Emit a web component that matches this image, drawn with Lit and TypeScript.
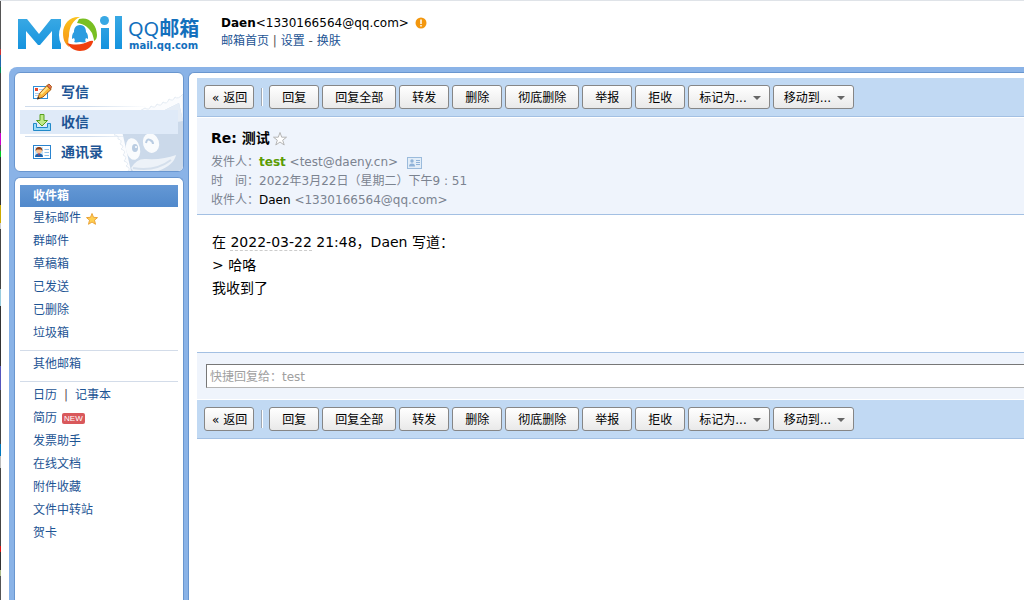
import { LitElement, html, css, svg } from "lit";
import { customElement } from "lit/decorators.js";

const uiFont = css`"DejaVu Sans", "Noto Sans CJK SC", sans-serif`;

@customElement("mail-logo")
class MailLogo extends LitElement {
  static styles = css`
    :host { display: flex; align-items: flex-start; gap: 5px; width: 184px; }
    svg { display: block; flex: none; }
    .words { display: flex; flex-direction: column; color: #1270bd; }
    .name { font: 20px/23px "Noto Sans", "Noto Sans CJK SC", sans-serif; white-space: nowrap; }
    .name b { font-family: "Noto Sans CJK SC", sans-serif; }
    .site { font: bold 10px/12px "DejaVu Sans", sans-serif; white-space: nowrap; padding-left: 1px; }
  `;
  render() {
    return html`
      <svg width="105" height="36" viewBox="0 0 105 36" role="img" aria-label="Mail">
        <defs>
          <linearGradient id="blue" x1="0" y1="0" x2="0" y2="1"><stop offset="0" stop-color="#38a8e4"/><stop offset="1" stop-color="#1593de"/></linearGradient>
          <linearGradient id="orange" x1="0" y1="0" x2="0" y2="1"><stop offset="0" stop-color="#fbc31d"/><stop offset="1" stop-color="#f79114"/></linearGradient>
        </defs>
        <path fill="url(#blue)" d="M0 3H9L21 18L33 3H43V10Q39 19 43 28V33H34V15L22 29H20L8 15V33H0Z"/>
        <circle cx="62" cy="18" r="20" fill="#fff"/>
        <path fill="url(#orange)" d="M62 1C52 0 45 8 45 17C45 24 47 28 51 31C50 27 50 24 51 20C51 11 55 4 62 1Z"/>
        <path fill="#79bf22" d="M61 3C71 0 79 9 79 19C79 22 78 24 76 25C76 23 75 20 74 17C71 12 67 8 59 7Q60 5 61 3Z"/>
        <path fill="#f0400f" d="M49 27C58 30 66 28 72 25Q76 24 75 26C73 32 68 35 62 35C56 35 51 31 49 27Z"/>
        <path fill="#2b9ce0" d="M62 9C57 9 56 13 56 16C54 18 54 20 54 23L56 22C57 24 57 25 56 26C58 27 60 26 62 26C64 26 66 27 68 26C67 25 67 24 68 22L70 23C70 20 70 18 68 16C68 13 67 9 62 9Z"/>
        <circle cx="86.500" cy="4.500" r="4.500" fill="#38a8e4"/>
        <path fill="url(#blue)" d="M83 12H91V33H83ZM97 0H104V33H97Z"/>
      </svg>
      <div class="words"><span class="name">QQ<b>邮箱</b></span><span class="site">mail.qq.com</span></div>
    `;
  }
}

@customElement("mail-toolbar")
class MailToolbar extends LitElement {
  static styles = css`
    :host { display: flex; align-items: center; gap: 3px; height: 38px; padding-left: 7px; background: #c1d9f3; border-bottom: 1px solid #a3c0e3; }
    button { box-sizing: border-box; flex: none; height: 24px; margin: 0; padding: 1px 12px 0; border: 1px solid #868686; border-radius: 3px; background: linear-gradient(#fff, #e9e9e9); color: #000; font: 12px/20px "DejaVu Sans", "Noto Sans CJK SC", sans-serif; white-space: nowrap; }
    .back { padding: 1px 6px 0 7px; }
    .menu { display: flex; align-items: center; gap: 6px; padding: 1px 8px 0 10px; }
    .menu::after { content: ""; border: 4px solid transparent; border-top-color: #666; border-bottom: 0; }
    .split { width: 1px; height: 18px; margin: 0 3px 0 4px; background: #a0a8b2; border-right: 1px solid #fff; }
  `;
  render() {
    return html`
      <button class="back">«&nbsp;返回</button>
      <span class="split"></span>
      ${["回复", "回复全部", "转发", "删除", "彻底删除", "举报", "拒收"].map((t) => html`<button>${t}</button>`)}
      ${["标记为...", "移动到..."].map((t) => html`<button class="menu">${t}</button>`)}
    `;
  }
}

const composeIcon = svg`
  <rect x="1.500" y="3.500" width="14" height="12" fill="#fff" stroke="#2f8fd8"/>
  <rect x="3" y="5" width="3" height="3" fill="#e8482c"/><path d="M7 6.500H12M3 10.500H8M3 12.500H6" stroke="#a9cdea"/>
  <path d="M5.500 16L7.500 10.500L15 2.500L19 6.500L11 14Z" fill="#fcb93a" stroke="#a85b12"/>
  <path d="M9 11L15.500 4.500" stroke="#ffe58c" stroke-width="2"/><path d="M15 2.500L17 1L19.500 3.500L18.500 6.500Z" fill="#e9725a" stroke="#a85b12"/><path d="M5 16.500L6 13.500L8 15.500Z" fill="#333"/>`;
const inboxIcon = svg`
  <path d="M1.500 10.500H4.500V14.500H15.500V10.500H18.500V17.500H1.500Z" fill="#9bdcf7" stroke="#2189c8"/>
  <path d="M8 1.500H12V7.500H15.500L10 13L4.500 7.500H8Z" fill="#bfe986" stroke="#58a020"/>`;
const contactIcon = svg`
  <rect x="1.500" y="2.500" width="17" height="13" fill="#fff" stroke="#2a84cf"/>
  <rect x="3" y="4" width="8" height="10" fill="#c5e4fa"/><circle cx="7" cy="7.500" r="3" fill="#f7c291"/><path d="M3.500 8Q3.500 4 7 4T10.500 8L9 6.500H5Z" fill="#8c3b12"/>
  <path d="M3 14Q3 10.500 7 10.500T11 14Z" fill="#1c62ac"/><path d="M6 10.500L7 13L8 10.500Z" fill="#e33"/><path d="M12.500 6.500H17M12.500 9.500H17M12.500 12.500H17" stroke="#8fc0e8"/>`;

@customElement("mail-sidebar")
class MailSidebar extends LitElement {
  static styles = css`
    :host { display: flex; flex-direction: column; gap: 5px; font: 12px/23px ${uiFont}; }
    a { color: #1d5494; text-decoration: none; }
    .panel { box-sizing: border-box; background: #fff; border: 1px solid #6996cf; border-radius: 6px; padding: 7px 5px; }
    .main { position: relative; height: 100px; overflow: hidden; }
    .art { position: absolute; right: 0; bottom: 0; }
    .main nav { position: relative; display: flex; flex-direction: column; }
    .main a { display: flex; align-items: center; gap: 9px; height: 24px; padding-left: 12px; font: bold 14px/24px ${uiFont}; }
    .main a.on { background: #dfeaf8; }
    .main a svg { width: 20px; height: 18px; }
    .rule { height: 1px; margin: 2px 0 3px 5px; background: linear-gradient(90deg, #cfdcec 40%, transparent 80%); }
    .folders { flex: 1; border-bottom: 0; border-radius: 6px 6px 0 0; }
    .row { display: flex; align-items: center; gap: 5px; height: 23px; padding-left: 13px; }
    .row.on { height: 22px; background: linear-gradient(#6498d5, #5189cb); }
    .row.on a { color: #fff; font-weight: bold; }
    .group { border-top: 1px solid #d3dce9; margin-top: 5px; padding-top: 2px; }
    .bar { color: #555; padding: 0 2px; }
    .new { padding: 0 2px; border-radius: 2px; background: #d9585b; color: #fff; font: 8px/11px "Liberation Sans", sans-serif; }
  `;
  render() {
    return html`
      <section class="panel main">
        <svg class="art" width="70" height="78" viewBox="0 0 70 78" aria-hidden="true">
          <path d="M1 42Q6 42 5 46Q10 47 7 51Q12 53 8 56Q14 58 10 62Q15 64 11 68Q17 70 13 73Q18 75 15 78H70V1Q65 7 62 4Q60 9 56 6Q54 12 50 9Q48 14 44 11Q42 16 38 13Q36 18 32 15Q22 19 1 42Z" fill="#fbfcfe" stroke="#e4ebf3"/>
          <path d="M9 38L66 10L70 28V78H18Z" fill="#cbd9ea"/><path d="M9 38L66 10L70 28Z" fill="#e6edf6"/>
          <ellipse cx="20" cy="56" rx="7" ry="11" fill="#f9fbfd" transform="rotate(-12 20 56)"/>
          <ellipse cx="38" cy="50" rx="8" ry="10" fill="#f9fbfd" transform="rotate(-16 38 50)"/>
          <ellipse cx="22" cy="55" rx="3" ry="4" fill="#b9cce2"/><circle cx="23" cy="54" r="1" fill="#fff"/>
          <path d="M33 50Q34 45 37 47Q40 48 40 51" fill="none" stroke="#b9cce2" stroke-width="2"/>
          <path d="M18 75Q24 65 33 66Q50 67 63 62Q61 72 45 78H20Z" fill="#edf2f8"/>
          <path d="M20 75Q42 79 58 67" fill="none" stroke="#d4dfec" stroke-width="2"/>
        </svg>
        <nav>
          <a href="#"><svg viewBox="0 0 20 18">${composeIcon}</svg>写信</a>
          <div class="rule"></div>
          <a href="#" class="on"><svg viewBox="0 0 20 18">${inboxIcon}</svg>收信</a>
          <div class="rule"></div>
          <a href="#"><svg viewBox="0 0 20 18">${contactIcon}</svg>通讯录</a>
        </nav>
      </section>
      <nav class="panel folders">
        <div class="row on"><a href="#">收件箱</a></div>
        <div class="row"><a href="#">星标邮件</a><svg width="12" height="12" viewBox="0 0 12 12"><path d="M6 .5L7.500 4.300L11.500 4.600L8.500 7.200L9.500 11.300L6 9L2.500 11.300L3.500 7.200L.5 4.600L4.500 4.300Z" fill="#ffcf50" stroke="#eba43a"/></svg></div>
        ${["群邮件", "草稿箱", "已发送", "已删除", "垃圾箱"].map((t) => html`<div class="row"><a href="#">${t}</a></div>`)}
        <div class="group"><div class="row"><a href="#">其他邮箱</a></div></div>
        <div class="group">
          <div class="row"><a href="#">日历</a><span class="bar">|</span><a href="#">记事本</a></div>
          <div class="row"><a href="#">简历</a><span class="new">NEW</span></div>
          ${["发票助手", "在线文档", "附件收藏", "文件中转站", "贺卡"].map((t) => html`<div class="row"><a href="#">${t}</a></div>`)}
        </div>
      </nav>
    `;
  }
}

@customElement("mail-reader")
class MailReader extends LitElement {
  static styles = css`
    :host { display: block; font: 12px/19px ${uiFont}; color: #000; }
    .head { margin-top: 1px; padding: 10px 14px 4px; background: #eff4fc; border-bottom: 1px solid #a3c0e3; color: #7b8390; }
    h1 { display: flex; align-items: center; gap: 2px; margin: 0 0 4px; font: bold 14px/21px ${uiFont}; color: #000; }
    .field { display: flex; align-items: center; height: 19px; white-space: pre; }
    .label { width: 48px; }
    .sender { color: #5b9c04; }
    .to { color: #000; }
    .card { margin-left: 9px; }
    .body { min-height: 121px; padding: 16px 15px 0; font-size: 14px; line-height: 23px; }
    .body p { margin: 0; }
    .date { border-bottom: 1px dashed #ccc; }
    .reply { display: flex; padding: 11px 0 11px 9px; background: #eff4fc; border-top: 1px solid #a3c0e3; border-bottom: 1px solid #fff; }
    input { box-sizing: border-box; flex: 1; min-width: 0; height: 24px; margin: 0; padding: 1px 3px 0; border: 1px solid #b4b4b4; border-top-color: #777; border-left-color: #777; border-right: 0; border-radius: 0; background: #fff; font: 12px/20px ${uiFont}; }
    input::placeholder { color: #a0a0a0; opacity: 1; }
  `;
  render() {
    return html`
      <mail-toolbar></mail-toolbar>
      <header class="head">
        <h1>Re: 测试<svg width="16" height="16" viewBox="0 0 16 16"><path d="M8 1.500L9.700 6.200H14.500L10.700 9.200L12.200 14L8 11L3.800 14L5.300 9.200L1.500 6.200H6.300Z" fill="#fff" stroke="#b5b5b5"/></svg></h1>
        <div class="field"><span class="label">发件人：</span><b class="sender">test</b><span> &lt;test@daeny.cn&gt;</span>
          <svg class="card" width="15" height="12" viewBox="0 0 15 12"><rect x=".5" y=".5" width="14" height="11" fill="#e2edf8" stroke="#9bbbdc"/><circle cx="5" cy="4" r="1.700" fill="#8fb2d8"/><path d="M2 9.500Q2 6.500 5 6.500T8 9.500Z" fill="#8fb2d8"/><path d="M9 3.500H13M9 5.500H13M9 7.500H13" stroke="#8fb2d8"/></svg></div>
        <div class="field"><span class="label">时　间：</span><span>2022年3月22日（星期二）下午9 : 51</span></div>
        <div class="field"><span class="label">收件人：</span><span class="to">Daen</span><span> &lt;1330166564@qq.com&gt;</span></div>
      </header>
      <article class="body">
        <p>在 <span class="date">2022-03-22</span> 21:48，Daen 写道：</p>
        <p>&gt; 哈咯</p>
        <p>我收到了</p>
      </article>
      <div class="reply"><input aria-label="快捷回复" placeholder="快捷回复给：test" /></div>
      <mail-toolbar></mail-toolbar>
    `;
  }
}

@customElement("app-root")
class AppRoot extends LitElement {
  static styles = css`
    :host { box-sizing: border-box; display: flex; height: 100vh; overflow: hidden; background: #fff; border-top: 1px solid #dfe3e8; font: 12px/18px ${uiFont}; }
    .edge { flex: none; width: 1px; background: linear-gradient(#555 0 8%, #c33 8% 9%, #26a 9% 11%, #085 11% 12%, #444 12% 22%, #c0c 22% 24%, #555 24% 25%, #0c2 25% 26%, #333 26% 34%, #ca0 34% 37%, #ccc 37% 38%, #444 38% 48%, #9cd 48% 51%, #333 51% 61%, #55b 61% 65%, #444 65% 74%, #07b 74% 76%, #bbb 76% 78%, #444 78% 91%, #d11 91% 92%, #333 92% 95%, #ab8 95% 96%, #555 96%); }
    .page { flex: 1; min-width: 0; display: flex; flex-direction: column; }
    .top { display: flex; gap: 19px; flex: none; height: 51px; padding: 15px 0 0 17px; }
    .account { display: flex; flex-direction: column; margin-top: -2px; }
    .who { display: flex; align-items: center; white-space: nowrap; }
    .warn { margin-left: 6px; }
    .links { color: #555; white-space: pre; }
    .links a { color: #1d5494; text-decoration: none; }
    .frame { flex: 1; min-height: 0; display: flex; gap: 4px; margin-left: 8px; padding: 5px 0 0 5px; background: #8ab3e7; border-radius: 8px 0 0 0; }
    mail-sidebar { flex: none; width: 170px; }
    .content { flex: 1; min-width: 0; background: #fff; border: 1px solid #6996cf; border-width: 1px 0 0 1px; border-radius: 6px 0 0 0; padding: 5px 0 0 8px; }
  `;
  render() {
    return html`
      <div class="edge"></div>
      <div class="page">
        <header class="top">
          <mail-logo></mail-logo>
          <div class="account">
            <div class="who"><b>Daen</b>&lt;1330166564@qq.com&gt;<svg class="warn" width="12" height="12" viewBox="0 0 12 12"><circle cx="6" cy="6" r="5.500" fill="#f3970e"/><path d="M6 2.500V7M6 8V9.500" stroke="#fff" stroke-width="1.500"/></svg></div>
            <div class="links"><a href="#">邮箱首页</a> | <a href="#">设置</a> - <a href="#">换肤</a></div>
          </div>
        </header>
        <div class="frame">
          <mail-sidebar></mail-sidebar>
          <main class="content"><mail-reader></mail-reader></main>
        </div>
      </div>
    `;
  }
}
